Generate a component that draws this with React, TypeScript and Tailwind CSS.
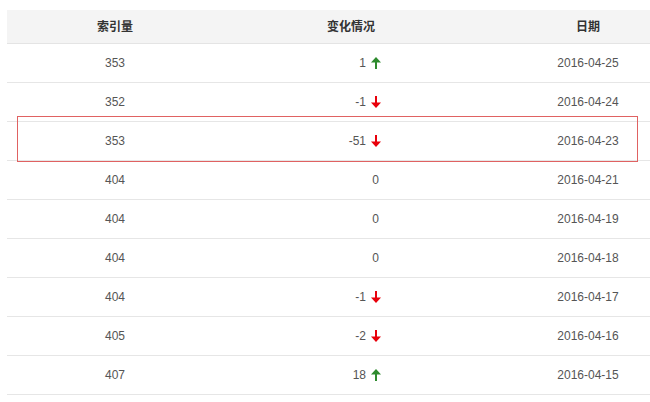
import React from "react";

const rows: { idx: string; change: string; dir: "up" | "down" | null; date: string }[] = [
  { idx: "353", change: "1", dir: "up", date: "2016-04-25" },
  { idx: "352", change: "-1", dir: "down", date: "2016-04-24" },
  { idx: "353", change: "-51", dir: "down", date: "2016-04-23" },
  { idx: "404", change: "0", dir: null, date: "2016-04-21" },
  { idx: "404", change: "0", dir: null, date: "2016-04-19" },
  { idx: "404", change: "0", dir: null, date: "2016-04-18" },
  { idx: "404", change: "-1", dir: "down", date: "2016-04-17" },
  { idx: "405", change: "-2", dir: "down", date: "2016-04-16" },
  { idx: "407", change: "18", dir: "up", date: "2016-04-15" },
];

function Arrow({ dir }: { dir: "up" | "down" }) {
  const color = dir === "up" ? "#2e8b2e" : "#e8000b";
  return (
    <svg width="10" height="12" viewBox="0 0 10 12" className="inline-block ml-[5px]">
      {dir === "up" ? (
        <g fill={color}>
          <polygon points="5,0 10,5.5 0,5.5" />
          <rect x="4" y="5" width="2" height="7" />
        </g>
      ) : (
        <g fill={color}>
          <polygon points="5,12 10,6.5 0,6.5" />
          <rect x="4" y="0" width="2" height="7" />
        </g>
      )}
    </svg>
  );
}

export default function App() {
  return (
    <div className="w-[650px] h-[402px] bg-white overflow-hidden relative" style={{ fontFamily: '"Liberation Sans", Arial, "Noto Sans CJK SC", sans-serif' }}>
      <div className="pt-[10px] pl-[7px]">
        <div className="w-[690px]">
          <div className="grid grid-cols-[216px_256px_218px] h-[34px] bg-[#f4f4f4] border-b border-[#e4e4e4] items-center text-[12px] font-bold text-[#333]">
            <div className="text-center">索引量</div>
            <div className="text-center">变化情况</div>
            <div className="text-center">日期</div>
          </div>
          {rows.map((r, i) => (
            <div key={i} className="grid grid-cols-[216px_256px_218px] h-[39px] border-b border-[#e6e6e6] items-center text-[12px] text-[#555]">
              <div className="text-center">{r.idx}</div>
              <div className="flex items-center justify-end pr-[98px]">
                <span>{r.change}</span>
                {r.dir ? <Arrow dir={r.dir} /> : <span className="w-[2px]" />}
              </div>
              <div className="text-center">{r.date}</div>
            </div>
          ))}
        </div>
      </div>
      <div className="absolute left-[17px] top-[116px] w-[621px] h-[46px] border border-[#e06262]" />
    </div>
  );
}
